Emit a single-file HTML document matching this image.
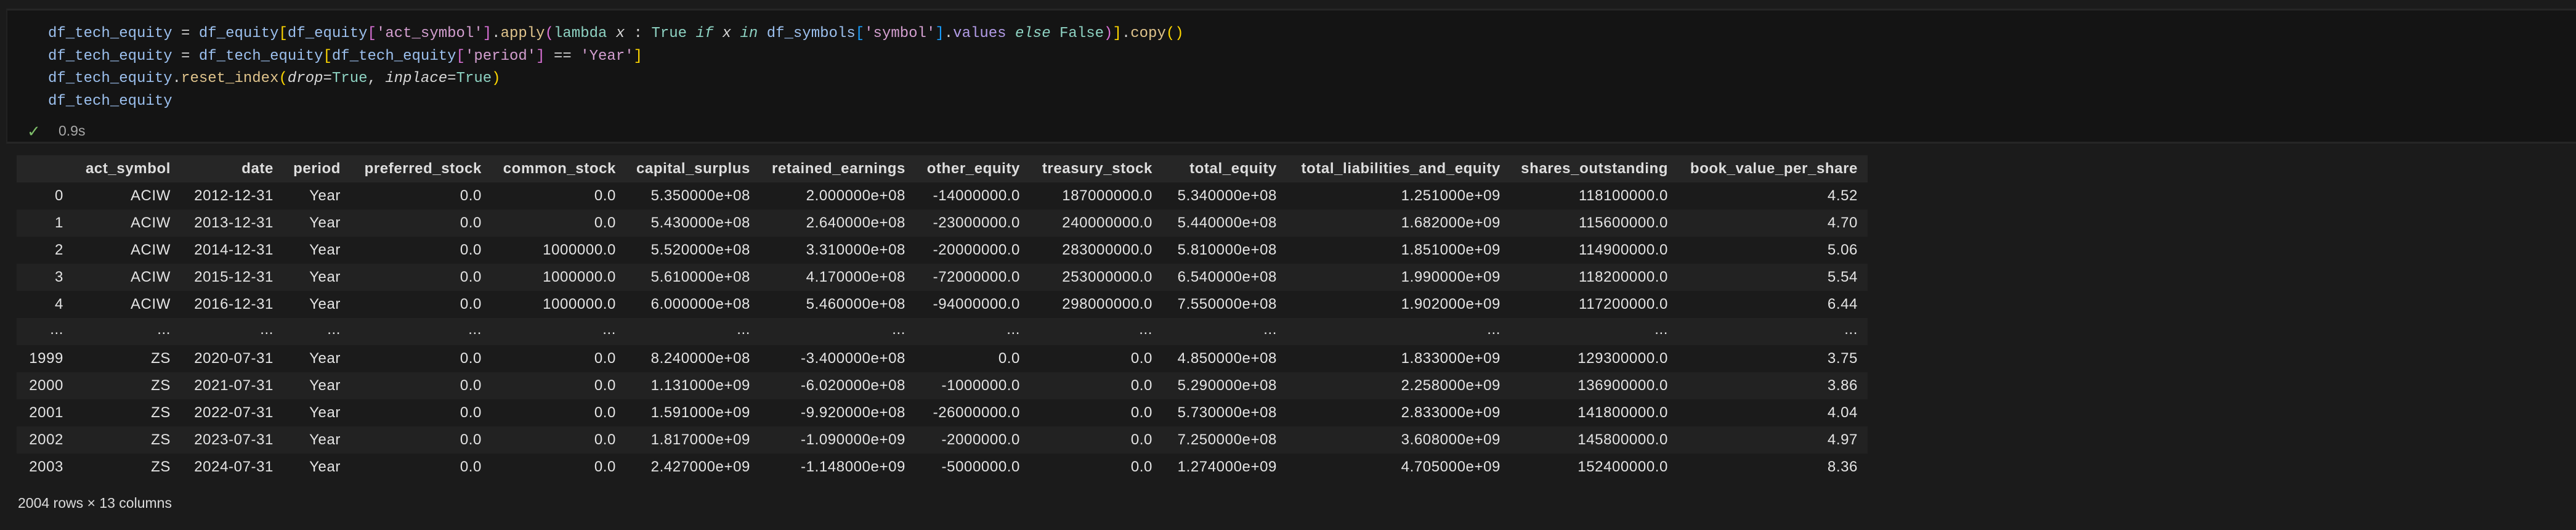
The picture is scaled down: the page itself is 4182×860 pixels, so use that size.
<!DOCTYPE html>
<html><head><meta charset="utf-8">
<style>
*{margin:0;padding:0;box-sizing:border-box}
html,body{width:4182px;height:860px;background:#1b1b1b;overflow:hidden}
body{position:relative;font-family:"Liberation Sans",sans-serif}
.cell{position:absolute;left:10px;top:14px;width:4172px;height:219px;background:#141414;border-top:3px solid #262626;border-bottom:3px solid #262626;border-left:2px solid #222}
.code{position:absolute;left:78px;top:37px;font-family:"Liberation Mono",monospace;font-size:24px;line-height:36.5px;color:#9cc0ee;white-space:pre}
.y{color:#ffd700}.p{color:#da70d6}.b{color:#179fff}.s{color:#d49fd0}.f{color:#e0c48c}.t{color:#8ed3c3}.k{color:#8ed3c3;font-style:italic}.i{font-style:italic;color:#d8d8d8}.o{color:#d4d4d4}.v{color:#b39ce8}
.check{position:absolute;left:44px;top:198px;color:#7fbf6a;font-size:26px}
.time{position:absolute;left:95px;top:199px;color:#a8a8a8;font-size:23px}
table{position:absolute;left:27px;top:252px;border-collapse:collapse;table-layout:fixed;width:3005px;font-size:24px;letter-spacing:0.6px;color:#e4e4e4}
td,th{height:44px;padding:0 16px 0 0;text-align:right;white-space:nowrap;overflow:visible}
th{font-weight:bold;color:#dedede}
thead tr{background:#262626}
tbody tr:nth-child(odd){background:#1b1b1b}
tbody tr:nth-child(even){background:#222222}
td.e{vertical-align:middle;padding-bottom:6px}
.foot{position:absolute;left:29px;top:803px;font-size:23px;color:#dcdcdc}
</style></head><body>
<div class="cell"></div>
<div class="code">df_tech_equity <span class="o">=</span> df_equity<span class="y">[</span>df_equity<span class="p">[</span><span class="s">'act_symbol'</span><span class="p">]</span><span class="o">.</span><span class="f">apply</span><span class="p">(</span><span class="t">lambda</span> <span class="i">x</span> <span class="o">:</span> <span class="t">True</span> <span class="k">if</span> <span class="i">x</span> <span class="k">in</span> df_symbols<span class="b">[</span><span class="s">'symbol'</span><span class="b">]</span><span class="o">.</span><span class="v">values</span> <span class="k">else</span> <span class="t">False</span><span class="p">)</span><span class="y">]</span><span class="o">.</span><span class="f">copy</span><span class="y">()</span>
df_tech_equity <span class="o">=</span> df_tech_equity<span class="y">[</span>df_tech_equity<span class="p">[</span><span class="s">'period'</span><span class="p">]</span> <span class="o">==</span> <span class="s">'Year'</span><span class="y">]</span>
df_tech_equity<span class="o">.</span><span class="f">reset_index</span><span class="y">(</span><span class="i">drop</span><span class="o">=</span><span class="t">True</span><span class="o">,</span> <span class="i">inplace</span><span class="o">=</span><span class="t">True</span><span class="y">)</span>
df_tech_equity</div>
<div class="check">✓</div>
<div class="time">0.9s</div>
<table>
<colgroup><col style="width:92px"><col style="width:174px"><col style="width:167px"><col style="width:109px"><col style="width:229px"><col style="width:218px"><col style="width:218px"><col style="width:252px"><col style="width:186px"><col style="width:215px"><col style="width:202px"><col style="width:363px"><col style="width:272px"><col style="width:308px"></colgroup>
<thead><tr><th></th><th>act_symbol</th><th>date</th><th>period</th><th>preferred_stock</th><th>common_stock</th><th>capital_surplus</th><th>retained_earnings</th><th>other_equity</th><th>treasury_stock</th><th>total_equity</th><th>total_liabilities_and_equity</th><th>shares_outstanding</th><th>book_value_per_share</th></tr></thead>
<tbody>
<tr><td>0</td><td>ACIW</td><td>2012-12-31</td><td>Year</td><td>0.0</td><td>0.0</td><td>5.350000e+08</td><td>2.000000e+08</td><td>-14000000.0</td><td>187000000.0</td><td>5.340000e+08</td><td>1.251000e+09</td><td>118100000.0</td><td>4.52</td></tr>
<tr><td>1</td><td>ACIW</td><td>2013-12-31</td><td>Year</td><td>0.0</td><td>0.0</td><td>5.430000e+08</td><td>2.640000e+08</td><td>-23000000.0</td><td>240000000.0</td><td>5.440000e+08</td><td>1.682000e+09</td><td>115600000.0</td><td>4.70</td></tr>
<tr><td>2</td><td>ACIW</td><td>2014-12-31</td><td>Year</td><td>0.0</td><td>1000000.0</td><td>5.520000e+08</td><td>3.310000e+08</td><td>-20000000.0</td><td>283000000.0</td><td>5.810000e+08</td><td>1.851000e+09</td><td>114900000.0</td><td>5.06</td></tr>
<tr><td>3</td><td>ACIW</td><td>2015-12-31</td><td>Year</td><td>0.0</td><td>1000000.0</td><td>5.610000e+08</td><td>4.170000e+08</td><td>-72000000.0</td><td>253000000.0</td><td>6.540000e+08</td><td>1.990000e+09</td><td>118200000.0</td><td>5.54</td></tr>
<tr><td>4</td><td>ACIW</td><td>2016-12-31</td><td>Year</td><td>0.0</td><td>1000000.0</td><td>6.000000e+08</td><td>5.460000e+08</td><td>-94000000.0</td><td>298000000.0</td><td>7.550000e+08</td><td>1.902000e+09</td><td>117200000.0</td><td>6.44</td></tr>
<tr><td class="e">...</td><td class="e">...</td><td class="e">...</td><td class="e">...</td><td class="e">...</td><td class="e">...</td><td class="e">...</td><td class="e">...</td><td class="e">...</td><td class="e">...</td><td class="e">...</td><td class="e">...</td><td class="e">...</td><td class="e">...</td></tr>
<tr><td>1999</td><td>ZS</td><td>2020-07-31</td><td>Year</td><td>0.0</td><td>0.0</td><td>8.240000e+08</td><td>-3.400000e+08</td><td>0.0</td><td>0.0</td><td>4.850000e+08</td><td>1.833000e+09</td><td>129300000.0</td><td>3.75</td></tr>
<tr><td>2000</td><td>ZS</td><td>2021-07-31</td><td>Year</td><td>0.0</td><td>0.0</td><td>1.131000e+09</td><td>-6.020000e+08</td><td>-1000000.0</td><td>0.0</td><td>5.290000e+08</td><td>2.258000e+09</td><td>136900000.0</td><td>3.86</td></tr>
<tr><td>2001</td><td>ZS</td><td>2022-07-31</td><td>Year</td><td>0.0</td><td>0.0</td><td>1.591000e+09</td><td>-9.920000e+08</td><td>-26000000.0</td><td>0.0</td><td>5.730000e+08</td><td>2.833000e+09</td><td>141800000.0</td><td>4.04</td></tr>
<tr><td>2002</td><td>ZS</td><td>2023-07-31</td><td>Year</td><td>0.0</td><td>0.0</td><td>1.817000e+09</td><td>-1.090000e+09</td><td>-2000000.0</td><td>0.0</td><td>7.250000e+08</td><td>3.608000e+09</td><td>145800000.0</td><td>4.97</td></tr>
<tr><td>2003</td><td>ZS</td><td>2024-07-31</td><td>Year</td><td>0.0</td><td>0.0</td><td>2.427000e+09</td><td>-1.148000e+09</td><td>-5000000.0</td><td>0.0</td><td>1.274000e+09</td><td>4.705000e+09</td><td>152400000.0</td><td>8.36</td></tr>
</tbody></table>
<div class="foot">2004 rows × 13 columns</div>
</body></html>
